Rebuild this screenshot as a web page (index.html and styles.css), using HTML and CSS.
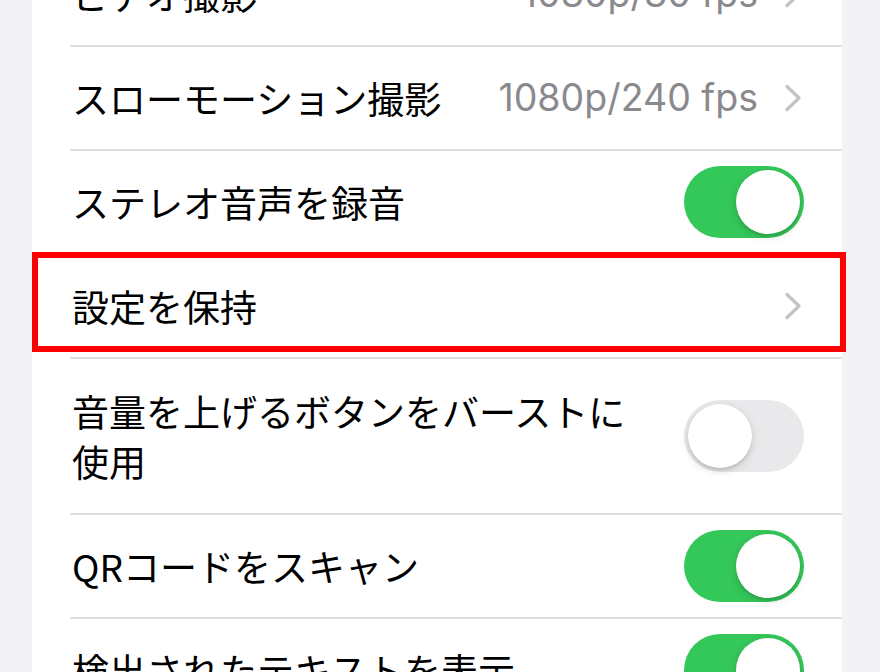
FILE: index.html
```html
<!DOCTYPE html>
<html lang="ja">
<head>
<meta charset="utf-8">
<title>カメラ設定</title>
<link rel="stylesheet" href="styles.css">
</head>
<body>
<div class="page">
  <div class="card">
    <div class="row">
      <span class="label">ビデオ撮影</span>
      <span class="value">1080p/30 fps</span>
      <svg class="chevron" viewBox="0 0 20 28" width="20" height="28"><path d="M3 2.5 L15 14 L3 25.5" fill="none" stroke="#c4c4c7" stroke-width="3.4" stroke-linecap="round" stroke-linejoin="round"/></svg>
    </div>
    <div class="row">
      <span class="label">スローモーション撮影</span>
      <span class="value">1080p/240 fps</span>
      <svg class="chevron" viewBox="0 0 20 28" width="20" height="28"><path d="M3 2.5 L15 14 L3 25.5" fill="none" stroke="#c4c4c7" stroke-width="3.4" stroke-linecap="round" stroke-linejoin="round"/></svg>
    </div>
    <div class="row">
      <span class="label">ステレオ音声を録音</span>
      <span class="toggle on"><span class="knob"></span></span>
    </div>
    <div class="row highlighted">
      <span class="label">設定を保持</span>
      <svg class="chevron" viewBox="0 0 20 28" width="20" height="28"><path d="M3 2.5 L15 14 L3 25.5" fill="none" stroke="#c4c4c7" stroke-width="3.4" stroke-linecap="round" stroke-linejoin="round"/></svg>
      <span class="highlight"></span>
    </div>
    <div class="row tall">
      <span class="label"><span class="wrap">音量を上げるボタンをバーストに使用</span></span>
      <span class="toggle"><span class="knob"></span></span>
    </div>
    <div class="row">
      <span class="label">QRコードをスキャン</span>
      <span class="toggle on"><span class="knob"></span></span>
    </div>
    <div class="row">
      <span class="label">検出されたテキストを表示</span>
      <span class="toggle on"><span class="knob"></span></span>
    </div>
  </div>
</div>
</body>
</html>
```
FILE: styles.css
```css
html, body {
  margin: 0;
  padding: 0;
  background: #f2f2f7;
  overflow: hidden;
}

.page {
  width: 880px;
  height: 672px;
  padding: 0 38px 0 32px;
  box-sizing: border-box;
  overflow: hidden;
}

.card {
  background: #ffffff;
  margin-top: -57px;
}

.row {
  position: relative;
  display: flex;
  align-items: center;
  gap: 24px;
  height: 104px;
  box-sizing: border-box;
  margin-left: 38px;
  padding: 0 38px 0 2px;
  border-bottom: 2px solid #dedee0;
}

.row.tall {
  height: 156px;
}

.label {
  flex: 1;
  min-width: 0;
  font-family: "Noto Sans CJK JP", "Noto Sans", sans-serif;
  font-size: 37px;
  line-height: 50px;
  color: #000000;
}

.wrap {
  display: block;
  max-width: 570px;
}

.value {
  font-family: "Inter", "Noto Sans", sans-serif;
  font-size: 37.5px;
  line-height: 50px;
  color: #8a8a8e;
}

.chevron {
  flex: none;
  margin-left: 2px;
  margin-right: 0;
}

.toggle {
  flex: none;
  position: relative;
  width: 120px;
  height: 72px;
  border-radius: 36px;
  background: #e9e9eb;
}

.toggle.on {
  background: #34c759;
}

.knob {
  position: absolute;
  top: 4px;
  left: 4px;
  width: 64px;
  height: 64px;
  border-radius: 50%;
  background: #ffffff;
  box-shadow: 0 3px 8px rgba(0, 0, 0, 0.15), 0 3px 1px rgba(0, 0, 0, 0.06), 0 0 0 0.5px rgba(0, 0, 0, 0.04);
}

.toggle.on .knob {
  left: 52px;
}

.highlight {
  position: absolute;
  left: -38px;
  top: -3px;
  width: 814px;
  height: 100px;
  box-sizing: border-box;
  border: 6px solid #ff0000;
  pointer-events: none;
}
```
